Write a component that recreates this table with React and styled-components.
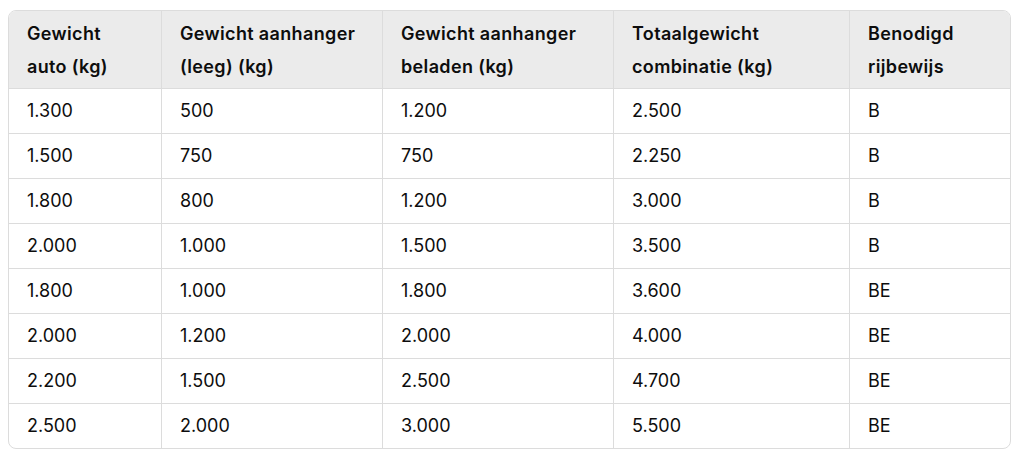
import React from "react";
import styled, { createGlobalStyle } from "styled-components";

const Global = createGlobalStyle`
  html, body { margin: 0; padding: 0; background: #ffffff; }
  body { font-family: Inter, "Noto Sans", "Liberation Sans", sans-serif; color: #0d0d0d; }
`;

const Page = styled.div`
  padding: 10px 13px 0 8px;
`;

const Frame = styled.div`
  border: 1px solid #dcdcdc;
  border-radius: 8px;
  overflow: hidden;
`;

const Table = styled.table`
  width: 100%;
  table-layout: fixed;
  border-collapse: separate;
  border-spacing: 0;
  font-size: 18px;
`;

const HeadCell = styled.th`
  background: #ebebeb;
  text-align: left;
  font-weight: 600;
  line-height: 33px;
  padding: 6px 18px 5px;
  vertical-align: top;
  letter-spacing: 0.35px;
  border-bottom: 1px solid #dcdcdc;
  border-right: ${(p) => (p.$last ? "none" : "1px solid #dcdcdc")};
`;

const Cell = styled.td`
  height: 44px;
  padding: 0 18px;
  line-height: 24px;
  font-weight: 400;
  vertical-align: middle;
  border-bottom: ${(p) => (p.$lastRow ? "none" : "1px solid #dcdcdc")};
  border-right: ${(p) => (p.$last ? "none" : "1px solid #dcdcdc")};
`;

const widths = [153, 221, 231, 236, 162];
const headers = [
  ["Gewicht", "auto (kg)"],
  ["Gewicht aanhanger", "(leeg) (kg)"],
  ["Gewicht aanhanger", "beladen (kg)"],
  ["Totaalgewicht", "combinatie (kg)"],
  ["Benodigd", "rijbewijs"],
];
const rows = [
  ["1.300", "500", "1.200", "2.500", "B"],
  ["1.500", "750", "750", "2.250", "B"],
  ["1.800", "800", "1.200", "3.000", "B"],
  ["2.000", "1.000", "1.500", "3.500", "B"],
  ["1.800", "1.000", "1.800", "3.600", "BE"],
  ["2.000", "1.200", "2.000", "4.000", "BE"],
  ["2.200", "1.500", "2.500", "4.700", "BE"],
  ["2.500", "2.000", "3.000", "5.500", "BE"],
];

export default function App() {
  return (
    <Page>
      <Global />
      <Frame>
        <Table>
          <colgroup>
            {widths.map((w, i) => (
              <col key={i} style={{ width: w }} />
            ))}
          </colgroup>
          <thead>
            <tr>
              {headers.map((h, i) => (
                <HeadCell key={i} $last={i === headers.length - 1}>
                  {h[0]}
                  <br />
                  {h[1]}
                </HeadCell>
              ))}
            </tr>
          </thead>
          <tbody>
            {rows.map((r, ri) => (
              <tr key={ri}>
                {r.map((c, ci) => (
                  <Cell key={ci} $last={ci === r.length - 1} $lastRow={ri === rows.length - 1}>
                    {c}
                  </Cell>
                ))}
              </tr>
            ))}
          </tbody>
        </Table>
      </Frame>
    </Page>
  );
}
